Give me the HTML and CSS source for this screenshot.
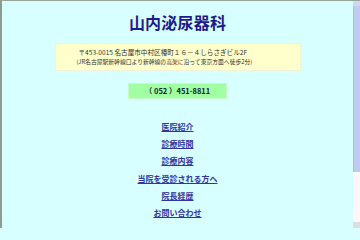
FILE: index.html
```html
<!DOCTYPE html>
<html lang="ja">
<head>
<meta charset="utf-8">
<title>山内泌尿器科</title>
<link rel="stylesheet" href="styles.css">
</head>
<body>
<div class="frame">
  <div class="page">
    <h1 class="title">山内泌尿器科</h1>
    <div class="address">
      <p class="addr1">〒453-0015 名古屋市中村区椿町１６－４しらさぎビル2F</p>
      <p class="addr2">(JR名古屋駅新幹線口より新幹線の高架に沿って東京方面へ徒歩2分)</p>
    </div>
    <div class="tel">（ 052 ）451-8811</div>
    <ul class="nav">
      <li><a href="#">医院紹介</a></li>
      <li><a href="#">診療時間</a></li>
      <li><a href="#">診療内容</a></li>
      <li><a href="#">当院を受診される方へ</a></li>
      <li><a href="#">院長経歴</a></li>
      <li><a href="#">お問い合わせ</a></li>
    </ul>
  </div>
  <div class="scrollbar">
    <div class="arrow up"></div>
    <div class="thumb"></div>
    <div class="track"></div>
    <div class="arrow down"></div>
  </div>
</div>
</body>
</html>
```
FILE: styles.css
```css
html, body {
  margin: 0;
  padding: 0;
  width: 360px;
  height: 228px;
  overflow: hidden;
}
body {
  font-family: "Noto Sans CJK JP", "Noto Sans", sans-serif;
  background: #d8ffff;
}
.frame {
  display: flex;
  height: 228px;
  box-sizing: border-box;
  border-left: 2px solid #8a9c8c;
  border-top: 1px solid #98a49a;
}
.page {
  flex: 1;
  display: flex;
  flex-direction: column;
  align-items: center;
  background: #d8ffff;
}
.title {
  margin: 11px 0 0;
  font-size: 16px;
  line-height: 20px;
  font-weight: 700;
  color: #1e1a8c;
  letter-spacing: 0.2px;
}
.address {
  margin-top: 11px;
  width: 246px;
  height: 28px;
  box-sizing: border-box;
  background: #ffffcc;
  border: 1px solid #f2f2d8;
  padding: 3.5px 0 0 23px;
}
.address p {
  margin: 0;
  color: #303030;
  white-space: nowrap;
}
.addr1 {
  font-size: 6.6px;
  line-height: 9px;
}
.addr2 {
  font-size: 5.8px;
  line-height: 9px;
  color: #505050;
  margin-left: -2px !important;
}
.tel {
  margin-top: 12px;
  width: 99px;
  height: 16px;
  box-sizing: border-box;
  background: #a0ffa0;
  border: 1px solid #c8f8c8;
  text-align: center;
  font-size: 7.5px;
  line-height: 14px;
  font-weight: 700;
  color: #202040;
}
.nav {
  list-style: none;
  margin: 23px 0 0;
  padding: 0;
  display: flex;
  flex-direction: column;
  align-items: center;
  gap: 7.2px;
}
.nav li {
  font-size: 8px;
  line-height: 10px;
  font-weight: 700;
}
.nav a {
  color: #3434a0;
  text-decoration: underline;
}
.scrollbar {
  width: 7px;
  display: flex;
  flex-direction: column;
  background: #fdf8f8;
}
.arrow {
  height: 5px;
  background: #e8ecf4;
}
.arrow.up {
  background: #d0d8f0;
}
.thumb {
  height: 166px;
  background: #c0cbf2;
  border-left: 1px solid #b0bce8;
}
.track {
  flex: 1;
  background: #fdf8f6;
}
.arrow.down {
  height: 6px;
  background: #dcdce4;
}
```
